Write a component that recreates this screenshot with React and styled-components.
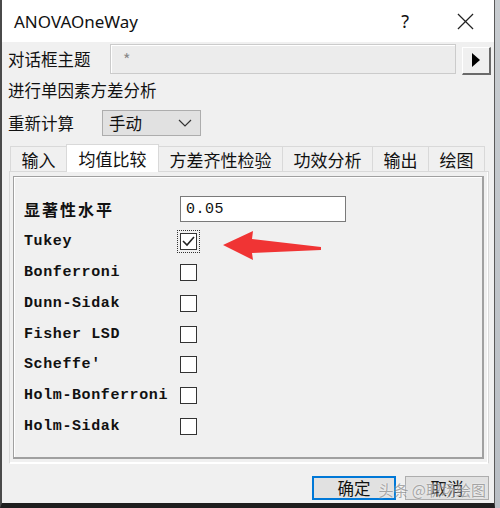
import React from 'react'
import styled, { createGlobalStyle } from 'styled-components'

const GlobalStyle = createGlobalStyle`
  html, body {
    margin: 0;
    padding: 0;
    background: #cdd1d5;
  }
  body {
    font-family: "Noto Sans", "Noto Sans CJK SC", sans-serif;
  }
`

const options = ['Tukey', 'Bonferroni', 'Dunn-Sidak', 'Fisher LSD', "Scheffe'", 'Holm-Bonferroni', 'Holm-Sidak']
const tabs = ['输入', '均值比较', '方差齐性检验', '功效分析', '输出', '绘图']

const App = () => {
    return (
        <Screen>
            <GlobalStyle />
            <Dialog>
                <TitleBar>
                    <span className='title'>ANOVAOneWay</span>
                    <span className='help'>?</span>
                    <CloseIcon viewBox="0 0 18 18">
                        <path d="M1 1 L17 17 M17 1 L1 17" stroke="#222" strokeWidth="1.3" />
                    </CloseIcon>
                </TitleBar>
                <Body>
                    <ThemeRow>
                        <Label>对话框主题</Label>
                        <ThemeInput>*</ThemeInput>
                        <ArrowButton>
                            <svg width="10" height="16" viewBox="0 0 10 16">
                                <polygon points="1,1 9,8 1,15" fill="#000" />
                            </svg>
                        </ArrowButton>
                    </ThemeRow>
                    <DescRow>进行单因素方差分析</DescRow>
                    <RecalcRow>
                        <Label>重新计算</Label>
                        <Select>
                            <span>手动</span>
                            <svg width="14" height="8" viewBox="0 0 14 8">
                                <path d="M1 1 L7 7 L13 1" fill="none" stroke="#333" strokeWidth="1.2" />
                            </svg>
                        </Select>
                    </RecalcRow>
                    <TabBar>
                        {tabs.map((t, i) => (
                            <Tab key={t} $active={i === 1}>{t}</Tab>
                        ))}
                    </TabBar>
                    <Panel>
                        <GroupBox>
                            <FieldGrid>
                                <BoldLabel>显著性水平</BoldLabel>
                                <ValueInput>0.05</ValueInput>
                                {options.map((o, i) => (
                                    <React.Fragment key={o}>
                                        <OptionLabel>{o}</OptionLabel>
                                        <CheckCell>
                                            <Checkbox $focused={i === 0}>
                                                {i === 0 && (
                                                    <svg width="13" height="11" viewBox="0 0 13 11">
                                                        <path d="M1 5 L5 9 L12 1" fill="none" stroke="#222" strokeWidth="1.6" />
                                                    </svg>
                                                )}
                                            </Checkbox>
                                        </CheckCell>
                                    </React.Fragment>
                                ))}
                            </FieldGrid>
                            <RedArrow width="102" height="34" viewBox="0 0 102 34">
                                <polygon points="2,16 32,2 31,10 100,18 100,21 31,24 32,31" fill="#f03434" />
                            </RedArrow>
                        </GroupBox>
                    </Panel>
                    <ButtonRow>
                        <Button $primary>确定</Button>
                        <Button>取消</Button>
                        <Watermark>头条 @职场绘图</Watermark>
                    </ButtonRow>
                </Body>
            </Dialog>
            <SideStrip />
        </Screen>
    )
}

export default App

const Screen = styled.div`
    width:500px;
    height:508px;
    display:flex;
    overflow:hidden;
`

const Dialog = styled.div`
    width:492px;
    height:503px;
    background:#f0f0f0;
    border-left:2px solid #4a4a4a;
    border-right:1px solid #5a5a5a;
    border-bottom:5px solid #1e1e1e;
    display:flex;
    flex-direction:column;
    font-family:"Noto Sans CJK SC", "Noto Sans", sans-serif;
    color:#111;
`

const SideStrip = styled.div`
    flex:1;
    background:linear-gradient(#c8ccd0, #b9bec4);
`

const TitleBar = styled.div`
    height:42px;
    background:#fff;
    display:flex;
    align-items:center;
    padding-left:12px;
    .title{
        font-family:"Noto Sans", sans-serif;
        font-size:17px;
        color:#111;
        flex:1;
    }
    .help{
        font-family:"Noto Sans", sans-serif;
        font-size:18px;
        margin-right:48px;
    }
`

const CloseIcon = styled.svg`
    width:17px;
    height:17px;
    margin-right:20px;
`

const Body = styled.div`
    flex:1;
    display:flex;
    flex-direction:column;
    padding:2px 0 0 6px;
`

const Label = styled.div`
    font-size:16.5px;
    line-height:1;
`

const ThemeRow = styled.div`
    display:flex;
    align-items:center;
    height:30px;
    ${Label}{
        width:102px;
    }
`

const ThemeInput = styled.div`
    width:332px;
    height:28px;
    border:1px solid #cbcbcb;
    box-shadow:inset 1px 1px 0 #fff;
    background:#ececec;
    color:#8a8a8a;
    font-size:16px;
    padding-left:12px;
    display:flex;
    align-items:center;
`

const ArrowButton = styled.div`
    width:26px;
    height:25px;
    margin:3px 0 0 6px;
    background:#f0f0f0;
    border-top:1px solid #fff;
    border-left:1px solid #fff;
    border-right:2px solid #6a6a6a;
    border-bottom:2px solid #6a6a6a;
    display:flex;
    align-items:center;
    justify-content:center;
`

const DescRow = styled.div`
    height:32px;
    display:flex;
    align-items:center;
    font-size:16.5px;
`

const RecalcRow = styled.div`
    display:flex;
    align-items:center;
    height:26px;
    margin-top:4px;
    ${Label}{
        width:94px;
    }
`

const Select = styled.div`
    background:#e1e1e1;
    border:1px solid #adadad;
    display:flex;
    align-items:center;
    justify-content:space-between;
    padding:0 8px 0 6px;
    box-sizing:border-box;
    width:99px;
    height:26px;
    font-size:16.5px;
`

const TabBar = styled.div`
    display:flex;
    align-items:flex-end;
    height:28px;
    margin-top:7px;
    padding-left:3px;
`

const Tab = styled.div`
    height:${p => p.$active ? '28px' : '25px'};
    padding:0 ${p => p.$active ? '11.5px' : '10.5px'};
    margin-left:-1px;
    background:${p => p.$active ? '#fff' : '#f0f0f0'};
    border:1px solid #d9d9d9;
    border-bottom:none;
    box-sizing:border-box;
    display:flex;
    align-items:center;
    font-size:17px;
    position:relative;
    z-index:${p => p.$active ? 1 : 0};
    margin-bottom:${p => p.$active ? '-1px' : '0'};
`

const Panel = styled.div`
    width:480px;
    height:293px;
    margin-left:1px;
    border:1px solid #d9d9d9;
    border-bottom-color:#fff;
    box-shadow:inset -1px -1px 0 #fff;
    box-sizing:border-box;
    padding:4px 4px 4px 3px;
    display:flex;
`

const GroupBox = styled.div`
    flex:1;
    border:2px solid #a0a0a0;
    border-top-width:1px;
    border-left-width:1px;
    box-shadow:inset 1px 1px 0 #fff;
    box-sizing:border-box;
    padding:19px 0 0 10px;
    position:relative;
`

const FieldGrid = styled.div`
    display:grid;
    grid-template-columns:156px 166px;
    grid-template-rows:30.65px repeat(7, 30.7px);
    align-items:center;
`

const BoldLabel = styled.div`
    align-self:start;
    height:26px;
    display:flex;
    align-items:center;
    font-family:"Noto Sans CJK SC", sans-serif;
    font-weight:bold;
    font-size:16px;
    letter-spacing:2px;
`

const ValueInput = styled.div`
    align-self:start;
    height:26px;
    box-sizing:border-box;
    border:1px solid #7a7a7a;
    background:#fff;
    font-family:"Liberation Mono", monospace;
    font-size:15px;
    letter-spacing:0.5px;
    padding-left:5px;
    display:flex;
    align-items:center;
`

const OptionLabel = styled.div`
    font-family:"Liberation Mono", "DejaVu Sans Mono", monospace;
    font-weight:bold;
    font-size:15px;
    letter-spacing:0.6px;
    color:#111;
`

const CheckCell = styled.div`
    display:flex;
    align-items:center;
`

const Checkbox = styled.div`
    width:17px;
    height:17px;
    box-sizing:border-box;
    border:1px solid #333;
    background:#fff;
    display:flex;
    align-items:center;
    justify-content:center;
    outline:${p => p.$focused ? '1px dotted #333' : 'none'};
    outline-offset:2px;
`

const RedArrow = styled.svg`
    position:absolute;
    left:207px;
    top:52px;
`

const ButtonRow = styled.div`
    display:flex;
    justify-content:flex-end;
    gap:9px;
    padding:12px 5px 0 0;
    position:relative;
`

const Button = styled.div`
    width:84px;
    height:24px;
    box-sizing:border-box;
    background:#e1e1e1;
    border:${p => p.$primary ? '2px solid #0078d7' : '1px solid #adadad'};
    display:flex;
    align-items:center;
    justify-content:center;
    font-size:16.5px;
`

const Watermark = styled.div`
    position:absolute;
    right:8px;
    top:15px;
    font-size:15px;
    color:rgba(90, 90, 90, 0.5);
    text-shadow:0 0 2px rgba(255,255,255,0.9);
    pointer-events:none;
`
